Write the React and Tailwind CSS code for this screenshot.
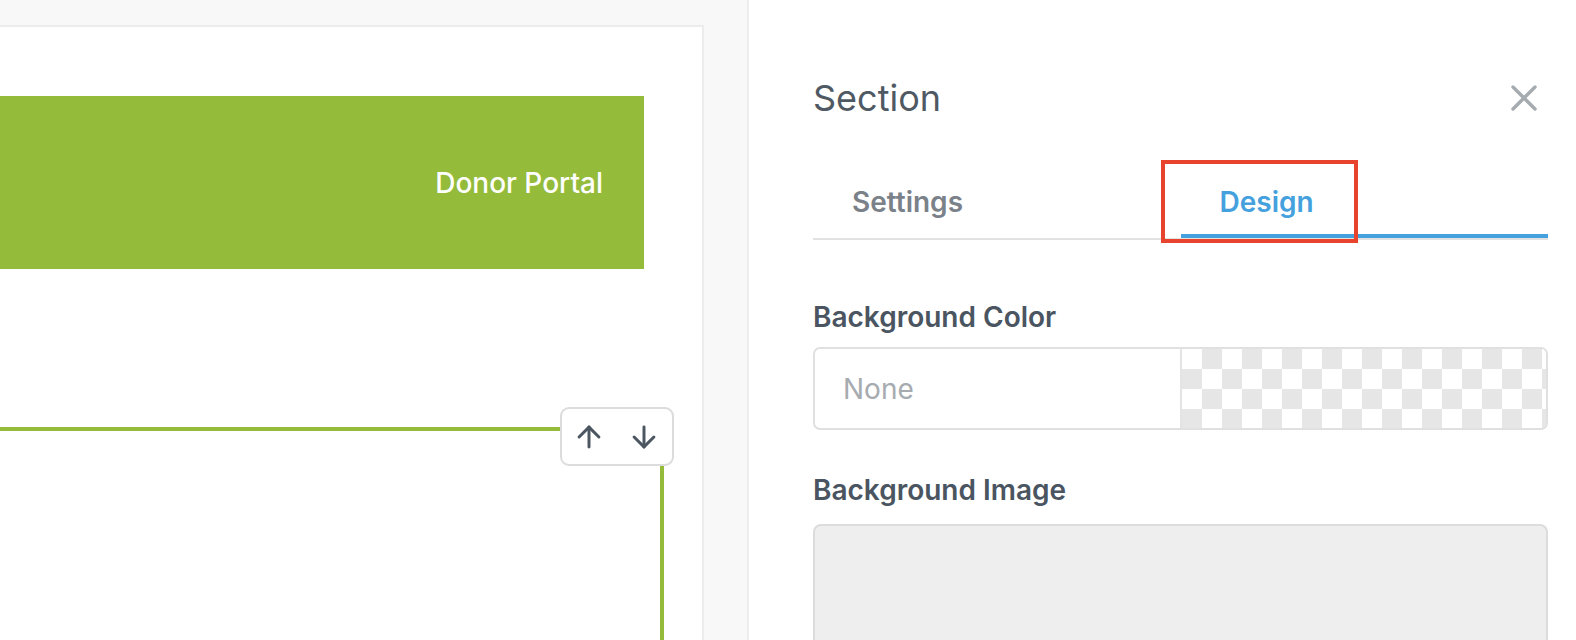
import React from 'react';
import { ArrowUp, ArrowDown } from 'lucide-react';

const font = { fontFamily: 'Inter, "Noto Sans", sans-serif' };

// canvas on the left: page preview with the selected section
const Canvas = () => (
    <div className="w-[749px] h-full shrink-0 bg-[#f8f8f8] border-r-2 border-[#ededed] pt-[25px] flex flex-col">
        <div className="w-[704px] flex-1 bg-white border-t-2 border-r-2 border-[#ececec] flex flex-col">
            <div className="mt-[69px] w-[644px] h-[173px] bg-[#94bb3a] flex items-center justify-end pr-[41px]">
                <span className="text-white text-[28px] font-medium leading-none">Donor Portal</span>
            </div>
            <div className="relative mt-[158px] w-[664px] flex-1 border-t-4 border-r-4 border-[#94bb3a]">
                <div className="absolute -top-[24px] -right-[14px] w-[114px] h-[59px] bg-white border-2 border-[#dcdcdc] rounded-[9px] flex items-center gap-[21px] pl-[10px] text-[#4c5660]">
                    <ArrowUp size={34} strokeWidth={2.1} />
                    <ArrowDown size={34} strokeWidth={2.1} />
                </div>
            </div>
        </div>
    </div>
);

const Tab = ({ label, active }) => (
    <div className={`flex-1 pl-[39px] pt-[16px] pb-[16px] border-b-4 ${active ? 'border-[#45a1de] text-[#45a1de]' : 'border-transparent text-[#7b8189]'}`}>
        <span className="block text-[28px] leading-[32px] font-semibold">{label}</span>
    </div>
);

const Panel = () => (
    <div className="flex-1 h-full bg-white pl-[64px] pr-[28px] pt-[77px] flex flex-col">
        <div className="h-[41px] flex items-center justify-between">
            <span className="text-[36px] leading-none text-[#4f5964]">Section</span>
            <svg width="26" height="26" viewBox="0 0 26 26" className="mr-[11px]">
                <path d="M2 2 24 24 M24 2 2 24" stroke="#a6abb0" strokeWidth="3.4" strokeLinecap="round" />
            </svg>
        </div>
        <div className="relative mt-[52px] flex border-b-2 border-[#e2e2e2]">
            <Tab label="Settings" />
            <Tab label="Design" active />
            {/* annotation box */}
            <div className="absolute left-[348px] -top-[10px] w-[197px] h-[83px] border-4 border-[#e8432d]" />
        </div>
        <div className="mt-[61px] text-[28px] leading-[32px] font-semibold text-[#4a5561]">Background Color</div>
        <div className="mt-[14px] h-[83px] flex border-2 border-[#e0e0e0] rounded-[7px] overflow-hidden">
            <div className="w-[365px] flex items-center pl-[28px] text-[28px] text-[#a6abb0]">None</div>
            <div className="flex-1 border-l-2 border-[#e4e4e4] bg-[conic-gradient(#e6e6e6_0_25%,#ffffff_0_50%,#e6e6e6_0_75%,#ffffff_0)] bg-[length:40px_40px]" />
        </div>
        <div className="mt-[44px] text-[28px] leading-[32px] font-semibold text-[#4a5561]">Background Image</div>
        <div className="mt-[18px] flex-1 -mb-[20px] bg-[#eeeeee] border-2 border-[#dcdcdc] rounded-[8px]" />
    </div>
);

export default function App() {
    return (
        <div className="w-[1576px] h-[640px] flex overflow-hidden" style={font}>
            <Canvas />
            <Panel />
        </div>
    );
}
